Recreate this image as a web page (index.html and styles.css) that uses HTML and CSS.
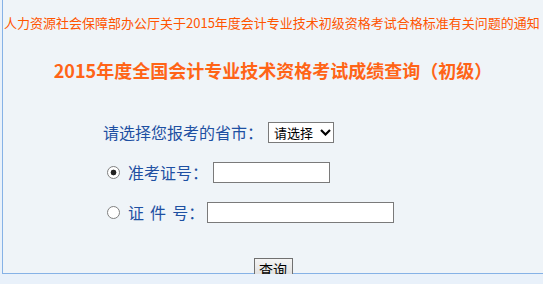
FILE: index.html
```html
<!DOCTYPE html>
<html lang="zh-CN">
<head>
<meta charset="utf-8">
<title>成绩查询</title>
<link rel="stylesheet" href="styles.css">
</head>
<body>
<div class="box">
  <div class="notice">人力资源社会保障部办公厅关于2015年度会计专业技术初级资格考试合格标准有关问题的通知</div>
  <h1 class="title">2015年度全国会计专业技术资格考试成绩查询（初级）</h1>
  <form class="form">
    <div class="row">
      <span class="label">请选择您报考的省市：</span>
      <span class="sel">
        <select class="select"><option>请选择</option></select>
        <svg class="chev" width="11" height="7" viewBox="0 0 11 7"><path d="M1 1 L5.5 5.5 L10 1" fill="none" stroke="#000" stroke-width="2.2"/></svg>
      </span>
    </div>
    <div class="row">
      <input type="radio" name="t" class="radio" checked>
      <span class="label">准考证号：</span>
      <input type="text" class="field field1">
    </div>
    <div class="row">
      <input type="radio" name="t" class="radio">
      <span class="label spaced">证 件 号：</span>
      <input type="text" class="field field2">
    </div>
    <div class="actions">
      <button type="button" class="btn">查询</button>
    </div>
  </form>
</div>
</body>
</html>
```
FILE: styles.css
```css
html, body {
  margin: 0;
  padding: 0;
}
body {
  background: #e9f1fa;
  font-family: "Noto Sans CJK SC", "Noto Sans", sans-serif;
  overflow: hidden;
}
.box {
  margin-left: 2px;
  box-sizing: border-box;
  height: 274px;
  border-left: 1px solid #86b2e6;
  border-bottom: 1px solid #86b2e6;
  background: #eff4f8;
}
.notice {
  padding-top: 13px;
  padding-left: 1px;
  font-size: 13px;
  line-height: 20px;
  color: #ff5500;
  white-space: nowrap;
}
.title {
  margin: 25px 0 0;
  text-align: center;
  font-size: 18px;
  line-height: 24px;
  font-weight: bold;
  color: #ff6417;
  white-space: nowrap;
}
.form {
  margin: 40px 0 0;
  padding-left: 100px;
  display: flex;
  flex-direction: column;
  gap: 19px;
}
.row {
  display: flex;
  align-items: center;
  height: 21px;
}
.label {
  font-size: 16px;
  line-height: 21px;
  color: #1e50a2;
  white-space: pre;
}
.spaced {
  word-spacing: 2.5px;
}
.sel {
  position: relative;
  margin-left: 5px;
  display: inline-flex;
}
.select {
  appearance: none;
  -webkit-appearance: none;
  width: 66px;
  height: 21px;
  box-sizing: border-box;
  border: 1px solid #7a7a7a;
  border-radius: 0;
  background: #fff;
  padding: 0 0 0 5px;
  margin: 0;
  font-family: "Noto Sans CJK SC", sans-serif;
  font-size: 13px;
  color: #000;
}
.chev {
  position: absolute;
  right: 3px;
  top: 7px;
  pointer-events: none;
}
.radio {
  appearance: none;
  -webkit-appearance: none;
  width: 13px;
  height: 13px;
  box-sizing: border-box;
  margin: 0 8px 0 4px;
  border: 1px solid #808080;
  border-radius: 50%;
  background: #fff;
}
.radio:checked {
  background: radial-gradient(circle, #222 0, #222 2.6px, #fff 3.2px);
}
.field {
  height: 21px;
  box-sizing: border-box;
  border: 1px solid #7a7a7a;
  border-radius: 0;
  background: #fff;
  padding: 0 2px;
  margin: 0;
}
.field1 {
  width: 117px;
  margin-left: 5px;
}
.field2 {
  width: 187px;
  margin-left: 3px;
}
.actions {
  margin-top: 16px;
  margin-left: -100px;
  display: flex;
  justify-content: center;
}
.btn {
  width: 39px;
  height: 22px;
  box-sizing: border-box;
  padding: 0;
  border: 1px solid #707070;
  border-radius: 0;
  background: linear-gradient(#f4f4f4, #dcdcdc);
  font-family: "Noto Sans CJK SC", sans-serif;
  font-size: 14px;
  line-height: 20px;
  color: #000;
}
```
